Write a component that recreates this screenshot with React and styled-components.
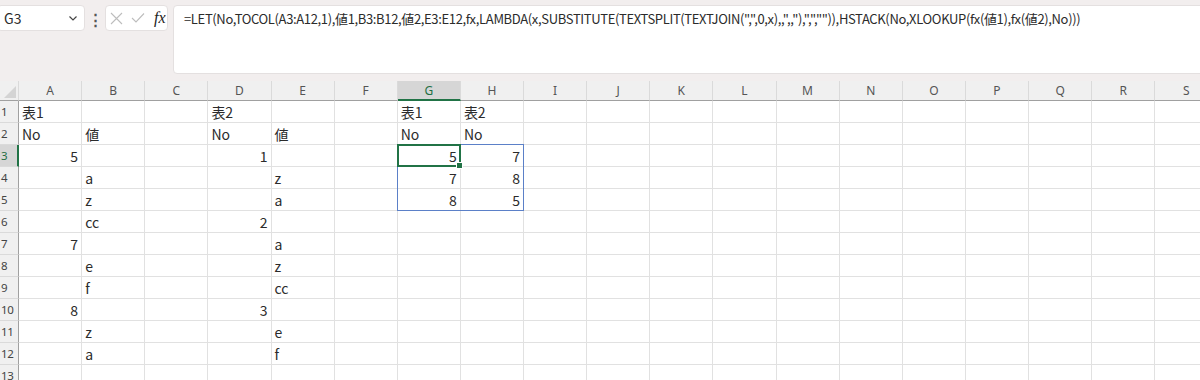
import styled, { createGlobalStyle } from "styled-components";

const GlobalStyle = createGlobalStyle`
  html, body {
    margin: 0;
    padding: 0;
    background: #ffffff;
    overflow: hidden;
    height: 380px;
  }
  body {
    font-family: "Noto Sans CJK JP", "Noto Sans", sans-serif;
  }
`;

const COLS = "ABCDEFGHIJKLMNOPQRS".split("");
const ROW_COUNT = 13;
const ACTIVE = { col: "G", row: 3 };

const data = {
  A1: "表1", D1: "表2", G1: "表1", H1: "表2",
  A2: "No", B2: "値", D2: "No", E2: "値", G2: "No", H2: "No",
  A3: 5, D3: 1, G3: 5, H3: 7,
  B4: "a", E4: "z", G4: 7, H4: 8,
  B5: "z", E5: "a", G5: 8, H5: 5,
  B6: "cc", D6: 2,
  A7: 7, E7: "a",
  B8: "e", E8: "z",
  B9: "f", E9: "cc",
  A10: 8, D10: 3,
  B11: "z", E11: "e",
  B12: "a", E12: "f",
};

const FORMULA =
  '=LET(No,TOCOL(A3:A12,1),値1,B3:B12,値2,E3:E12,fx,LAMBDA(x,SUBSTITUTE(TEXTSPLIT(TEXTJOIN(",",0,x),,",,"),",","")),HSTACK(No,XLOOKUP(fx(値1),fx(値2),No)))';

const Page = styled.div`
  width: 1200px;
  height: 380px;
  overflow: hidden;
  display: flex;
  flex-direction: column;
`;

const Toolbar = styled.div`
  height: 81px;
  flex: none;
  display: flex;
  align-items: flex-start;
  padding-top: 5px;
  box-sizing: border-box;
  background: #f2eeee;
`;

const NameBox = styled.div`
  width: 88px;
  height: 26px;
  margin-left: -3px;
  box-sizing: border-box;
  background: #fff;
  border: 1px solid #e4e0e0;
  border-radius: 4px;
  display: flex;
  align-items: center;
  justify-content: space-between;
  padding: 0 5px 0 6px;
  font-size: 14px;
  color: #2b2b2b;
`;

const Dots = styled.div`
  width: 20px;
  height: 26px;
  display: flex;
  align-items: center;
  justify-content: center;
  font-size: 15px;
  font-weight: bold;
  color: #555;
`;

const FxBox = styled.div`
  width: 63px;
  height: 26px;
  box-sizing: border-box;
  background: #fff;
  border: 1px solid #e4e0e0;
  border-radius: 4px;
  display: flex;
  align-items: center;
  gap: 8px;
  padding-left: 4px;
`;

const FxLabel = styled.span`
  font-family: "Liberation Serif", "DejaVu Serif", serif;
  font-style: italic;
  font-size: 16px;
  color: #222;
  margin-left: 1px;
`;

const FormulaBox = styled.div`
  flex: 1;
  height: 69px;
  margin-left: 5px;
  margin-right: -10px;
  box-sizing: border-box;
  background: #fff;
  border: 1px solid #e4e0e0;
  border-radius: 4px;
  padding: 3px 0 0 10px;
  font-size: 13px;
  line-height: 20px;
  color: #2b2b2b;
  white-space: nowrap;
  letter-spacing: -0.35px;
`;

const Sheet = styled.div`
  display: grid;
  grid-template-columns: 19px repeat(${COLS.length}, 63.13px);
  grid-template-rows: 20px repeat(${ROW_COUNT}, 22px);
  background: #fff;
`;

const Corner = styled.div`
  grid-column: 1;
  grid-row: 1;
  background: #f0f0f0;
  border-right: 1px solid #dadada;
  border-bottom: 1px solid #a0a0a0;
  box-sizing: border-box;
  position: relative;
  &::after {
    content: "";
    position: absolute;
    right: 2px;
    bottom: 2px;
    width: 12px;
    height: 12px;
    background: #d4d4d4;
    clip-path: polygon(100% 0, 100% 100%, 0 100%);
  }
`;

const ColHead = styled.div`
  grid-row: 1;
  grid-column: ${(p) => p.$col};
  box-sizing: border-box;
  display: flex;
  align-items: center;
  justify-content: center;
  font-family: "Noto Sans", "Open Sans", sans-serif;
  font-size: 12px;
  background: ${(p) => (p.$active ? "#d6d6d6" : "#f0f0f0")};
  color: ${(p) => (p.$active ? "#1f6e43" : "#555")};
  border-right: 1px solid #dadada;
  border-bottom: ${(p) => (p.$active ? "2px solid #217346" : "1px solid #a0a0a0")};
`;

const RowHead = styled.div`
  grid-column: 1;
  grid-row: ${(p) => p.$row};
  box-sizing: border-box;
  display: flex;
  align-items: center;
  padding-left: 1px;
  font-family: "Noto Sans", "Open Sans", sans-serif;
  font-size: 11.5px;
  letter-spacing: -0.3px;
  background: ${(p) => (p.$active ? "#d6d6d6" : "#f0f0f0")};
  color: ${(p) => (p.$active ? "#1f6e43" : "#444")};
  border-bottom: 1px solid #dadada;
  border-right: ${(p) => (p.$active ? "2px solid #217346" : "1px solid #a0a0a0")};
`;

const Cell = styled.div`
  grid-column: ${(p) => p.$col};
  grid-row: ${(p) => p.$row};
  box-sizing: border-box;
  display: flex;
  align-items: center;
  justify-content: ${(p) => (p.$num ? "flex-end" : "flex-start")};
  padding: 0 3px;
  font-size: 14px;
  color: #2b2b2b;
  border-right: 1px solid #e1e1e1;
  border-bottom: 1px solid #e1e1e1;
  white-space: nowrap;
  overflow: hidden;
`;

const RangeOutline = styled.div`
  grid-column: ${(p) => p.$cols};
  grid-row: ${(p) => p.$rows};
  margin: -1px 0 0 -1px;
  border: 1px solid #5b80c8;
  z-index: 1;
  pointer-events: none;
`;

const ActiveOutline = styled.div`
  grid-column: ${(p) => p.$cols};
  grid-row: ${(p) => p.$rows};
  margin: -1px 0 0 -1px;
  border: 2px solid #217346;
  z-index: 2;
  pointer-events: none;
  position: relative;
`;

const FillHandle = styled.span`
  position: absolute;
  right: -4px;
  bottom: -4px;
  width: 5px;
  height: 5px;
  background: #217346;
  border: 1px solid #fff;
`;

const Chevron = () => (
  <svg width="12" height="12" viewBox="0 0 12 12">
    <path d="M2.5 4.5 L6 8 L9.5 4.5" fill="none" stroke="#444" strokeWidth="1.2" />
  </svg>
);

const CrossIcon = () => (
  <svg width="13" height="13" viewBox="0 0 13 13">
    <path d="M1 1 L12 12 M12 1 L1 12" stroke="#bdbdbd" strokeWidth="1.1" />
  </svg>
);

const CheckIcon = () => (
  <svg width="14" height="12" viewBox="0 0 14 12">
    <path d="M1 6 L5 10 L13 1.5" fill="none" stroke="#bdbdbd" strokeWidth="1.1" />
  </svg>
);

const colIndex = (c) => COLS.indexOf(c) + 2;

export default function App() {
  const rows = Array.from({ length: ROW_COUNT }, (_, i) => i + 1);
  const g = colIndex("G");
  return (
    <Page>
      <GlobalStyle />
      <Toolbar>
        <NameBox>
          <span>G3</span>
          <Chevron />
        </NameBox>
        <Dots>⋮</Dots>
        <FxBox>
          <CrossIcon />
          <CheckIcon />
          <FxLabel>fx</FxLabel>
        </FxBox>
        <FormulaBox>{FORMULA}</FormulaBox>
      </Toolbar>
      <Sheet>
        <Corner />
        {COLS.map((c) => (
          <ColHead key={c} $col={colIndex(c)} $active={c === ACTIVE.col}>
            {c}
          </ColHead>
        ))}
        {rows.map((r) => [
          <RowHead key={`h${r}`} $row={r + 1} $active={r === ACTIVE.row}>
            {r}
          </RowHead>,
          ...COLS.map((c) => {
            const v = data[`${c}${r}`];
            return (
              <Cell key={`${c}${r}`} $col={colIndex(c)} $row={r + 1} $num={typeof v === "number"}>
                {v}
              </Cell>
            );
          }),
        ])}
        <RangeOutline $cols={`${g} / ${g + 2}`} $rows="4 / 7" />
        <ActiveOutline $cols={`${g} / ${g + 1}`} $rows="4 / 5">
          <FillHandle />
        </ActiveOutline>
      </Sheet>
    </Page>
  );
}
